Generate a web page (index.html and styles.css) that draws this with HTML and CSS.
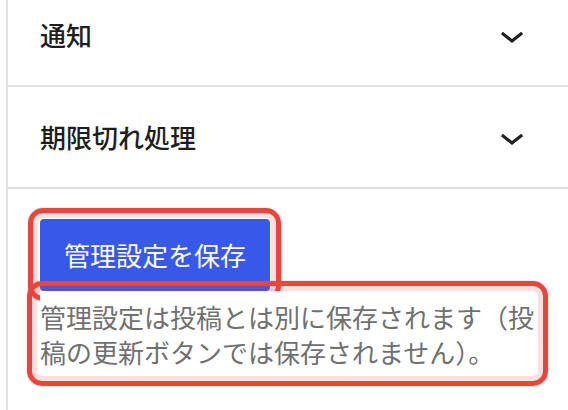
FILE: index.html
```html
<!DOCTYPE html>
<html lang="ja">
<head>
<meta charset="utf-8">
<title>管理設定</title>
<link rel="stylesheet" href="styles.css">
</head>
<body>
<div class="sidebar">
  <div class="panel panel-first">
    <h2 class="panel-title">
      <button class="toggle" type="button">
        <span class="toggle-label">通知</span>
        <svg class="chevron" viewBox="0 0 24 24" width="48" height="48" aria-hidden="true"><path d="M17.5 11.6L12 16l-5.5-4.4.9-1.2L12 14l4.6-3.6 1 1.2z"/></svg>
      </button>
    </h2>
  </div>
  <div class="panel">
    <h2 class="panel-title">
      <button class="toggle" type="button">
        <span class="toggle-label">期限切れ処理</span>
        <svg class="chevron" viewBox="0 0 24 24" width="48" height="48" aria-hidden="true"><path d="M17.5 11.6L12 16l-5.5-4.4.9-1.2L12 14l4.6-3.6 1 1.2z"/></svg>
      </button>
    </h2>
  </div>
  <div class="panel-body">
    <div class="btn-wrap">
      <button class="save" type="button">管理設定を保存</button>
      <span class="ring ring-a"></span>
    </div>
    <p class="help">管理設定は投稿とは別に保存されます（投稿の更新ボタンでは保存されません）。<span class="ring ring-b"></span></p>
  </div>
</div>
</body>
</html>
```

FILE: styles.css
```css
html, body {
  margin: 0;
  padding: 0;
  background: #ffffff;
}

body {
  font-family: "Noto Sans CJK JP", "Noto Sans", sans-serif;
  color: #1e1e1e;
  overflow: hidden;
}

.sidebar {
  margin-left: 6px;
  border-left: 2px solid #e0e0e0;
  min-height: 425px;
}

.panel {
  border-bottom: 2px solid #e0e0e0;
}

.panel-first {
  margin-top: -15px;
}

.panel-title {
  margin: 0;
  font-size: inherit;
  font-weight: inherit;
}

.toggle {
  display: flex;
  align-items: center;
  justify-content: space-between;
  width: 100%;
  height: 100px;
  padding: 0 32px;
  margin: 0;
  border: 0;
  background: transparent;
  font-family: inherit;
  font-size: 26px;
  font-weight: 500;
  color: #1e1e1e;
  text-align: left;
  box-sizing: border-box;
}

.toggle-label {
  line-height: 1.2;
}

.chevron {
  display: block;
  fill: #1e1e1e;
  flex: none;
}

.panel-body {
  padding: 30px 32px 30px;
}

.btn-wrap {
  position: relative;
  display: inline-block;
  vertical-align: top;
  z-index: 1;
}

.save {
  display: block;
  height: 72px;
  padding: 0 24px;
  margin: 0;
  border: 0;
  border-radius: 4px;
  background: #3858e9;
  color: #ffffff;
  font-family: inherit;
  font-size: 26px;
  font-weight: 400;
  line-height: 1;
}

.help {
  position: relative;
  z-index: 2;
  margin: 0;
  padding: 8px 0 7px;
  background: #ffffff;
  color: #707070;
  font-size: 26px;
  line-height: 35px;
}

.ring {
  position: absolute;
  border: 5px solid #e8453c;
  border-radius: 15px;
  box-shadow: inset 0 0 0 5px rgba(239, 68, 68, 0.17), 0 0 0 1px rgba(239, 68, 68, 0.12);
  pointer-events: none;
}

.ring-a {
  inset: -11px -11px -10px -12px;
}

.ring-b {
  inset: -10px -12px -10px -13px;
}
```
